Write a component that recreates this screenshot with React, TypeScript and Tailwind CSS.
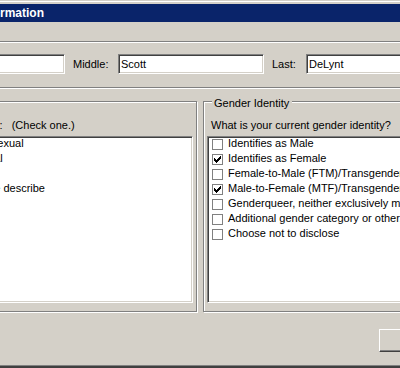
import React from "react";

const sunken =
	"border border-t-[#808080] border-l-[#808080] border-b-white border-r-white shadow-[inset_1px_1px_0_#404040,inset_-1px_-1px_0_#d4d0c8]";

const CheckMark = () => (
	<svg width="7" height="7" viewBox="0 0 7 7" shapeRendering="crispEdges" className="block">
		<path
			d="M0 2h1v3H0z M1 3h1v3H1z M2 4h1v3H2z M3 3h1v3H3z M4 2h1v3H4z M5 1h1v3H5z M6 0h1v3H6z"
			fill="#000"
		/>
	</svg>
);

const CheckItem = ({ label, checked }: { label: string; checked?: boolean }) => (
	<div className="flex items-start h-[15px]">
		<div className="mt-[1px] w-[11px] h-[11px] shrink-0 border border-[#808080] bg-white flex items-center justify-center">
			{checked && <CheckMark />}
		</div>
		<span className="ml-[5px] leading-[11px] whitespace-pre">{label}</span>
	</div>
);

const GroupBox = ({
	title,
	className,
	children,
}: {
	title: string;
	className: string;
	children: React.ReactNode;
}) => (
	<div
		className={`relative shrink-0 h-[211px] border border-[#808080] shadow-[inset_1px_1px_0_#fff,1px_1px_0_#fff] px-[3px] pt-[17px] pb-[8px] flex flex-col ${className}`}
	>
		<span className="absolute -top-[5px] left-[8px] pl-[2px] pr-[3px] bg-[#d4d0c8] leading-[13px] whitespace-nowrap">
			{title}
		</span>
		{children}
	</div>
);

const orientation = [
	"Lesbian, gay or homosexual",
	"Straight or heterosexual",
	"Bisexual",
	"Something else, please describe",
	"Don't know",
	"Choose not to disclose",
];

const gender: { label: string; checked?: boolean }[] = [
	{ label: "Identifies as Male" },
	{ label: "Identifies as Female", checked: true },
	{ label: "Female-to-Male (FTM)/Transgender Male/Trans Man" },
	{ label: "Male-to-Female (MTF)/Transgender Female/Trans Woman", checked: true },
	{ label: "Genderqueer, neither exclusively male nor female" },
	{ label: "Additional gender category or other, please specify" },
	{ label: "Choose not to disclose" },
];

export default function App() {
	return (
		<div className="w-[400px] h-[368px] overflow-hidden bg-[#d4d0c8] flex flex-col font-['Liberation_Sans',Arial,sans-serif] text-[11px] text-black">
			{/* window frame top */}
			<div className="h-[1px] shrink-0" />
			<div className="h-[1px] shrink-0 bg-white" />
			<div className="h-[2px] shrink-0" />
			<div className="h-[18px] shrink-0 bg-[#0a246a] flex items-center overflow-hidden">
				<span className="-ml-[22px] text-[12px] leading-[18px] font-bold text-white whitespace-nowrap">
					Information
				</span>
			</div>

			<div className="h-[19px] shrink-0" />
			<div className="h-[1px] shrink-0 bg-[#808080]" />
			<div className="h-[1px] shrink-0 bg-white" />

			{/* name row */}
			<div className="mt-[11px] h-[20px] shrink-0 flex items-center">
				<div className={`-ml-[135px] w-[200px] h-[20px] shrink-0 bg-white ${sunken}`} />
				<span className="ml-[8px] w-[45px] shrink-0 leading-[13px]">Middle:</span>
				<div className={`w-[146px] h-[20px] shrink-0 bg-white pl-[2px] leading-[18px] ${sunken}`}>Scott</div>
				<span className="ml-[8px] w-[34px] shrink-0 leading-[13px]">Last:</span>
				<div className={`w-[150px] h-[20px] shrink-0 bg-white pl-[2px] leading-[18px] ${sunken}`}>DeLynt</div>
			</div>

			<div className="mt-[13px] h-[1px] shrink-0 bg-[#808080]" />
			<div className="h-[1px] shrink-0 bg-white" />

			{/* group boxes */}
			<div className="mt-[12px] flex gap-[6px] -ml-[139px] shrink-0">
				<GroupBox title="Sexual Orientation" className="w-[336px]">
					<div className="flex pl-[5px] leading-[13px] whitespace-nowrap">
						<span>Do you think of yourself as:</span>
						<span className="ml-[9px]">(Check one.)</span>
					</div>
					<div className={`mt-[4px] h-[167px] bg-white pt-[1px] pl-[4px] overflow-hidden ${sunken}`}>
						{orientation.map((o) => (
							<CheckItem key={o} label={o} />
						))}
					</div>
				</GroupBox>
				<GroupBox title="Gender Identity" className="w-[250px]">
					<div className="pl-[4px] leading-[13px] whitespace-nowrap">What is your current gender identity?</div>
					<div className={`mt-[4px] h-[167px] bg-white pt-[1px] pl-[4px] overflow-hidden ${sunken}`}>
						{gender.map((g) => (
							<CheckItem key={g.label} label={g.label} checked={g.checked} />
						))}
					</div>
				</GroupBox>
			</div>

			{/* buttons */}
			<div className="mt-[17px] flex shrink-0">
				<button className="ml-[379px] w-[75px] h-[23px] shrink-0 bg-[#d4d0c8] border border-t-white border-l-white border-b-[#404040] border-r-[#404040] shadow-[inset_-1px_-1px_0_#808080] leading-[21px] text-center">
					OK
				</button>
			</div>

			<div className="flex-1" />
			<div className="h-[1px] shrink-0 bg-[#808080]" />
			<div className="h-[2px] shrink-0 bg-[#404040]" />
		</div>
	);
}
